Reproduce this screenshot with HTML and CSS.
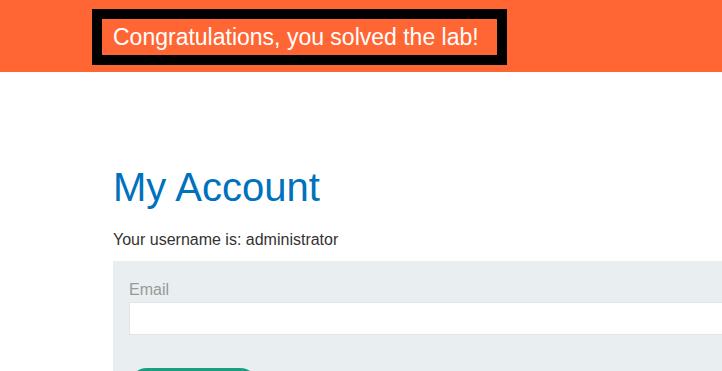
FILE: index.html
```html
<!DOCTYPE html>
<html lang="en">
<head>
<meta charset="utf-8">
<title>My Account</title>
<link rel="stylesheet" href="styles.css">
</head>
<body>
<header class="banner">
  <div class="banner-box">
    <p class="banner-text">Congratulations, you solved the lab!</p>
  </div>
</header>
<main class="container">
  <h1 class="title">My Account</h1>
  <p class="username">Your username is: administrator</p>
  <form class="panel">
    <label class="label" for="email">Email</label>
    <input class="input" id="email" type="email" name="email">
    <button class="button" type="button">Update email</button>
  </form>
</main>
</body>
</html>
```

FILE: styles.css
```css
html, body {
  overflow: hidden;
}
body {
  margin: 0;
  font-family: "Liberation Sans", Arial, sans-serif;
  color: #333332;
  background: #ffffff;
}
.banner {
  background: #ff6633;
  height: 72px;
  box-sizing: border-box;
  padding: 9px 0 0 92px;
}
.banner-box {
  width: 395px;
  height: 36px;
  border: 10px solid #000000;
  background: #ff6633;
}
.banner-text {
  margin: 0;
  padding-left: 11px;
  font-size: 23px;
  line-height: 36px;
  color: #ffffff;
  white-space: nowrap;
}
.container {
  margin-left: 113px;
  width: 720px;
}
.title {
  margin: 92px 0 0 0;
  font-size: 40px;
  line-height: 46px;
  font-weight: normal;
  color: #0071bc;
}
.username {
  margin: 20px 0 0 0;
  font-size: 16px;
  line-height: 20px;
}
.panel {
  margin-top: 11px;
  background: #e9eef0;
  padding: 19px 16px 20px 16px;
  display: flex;
  flex-direction: column;
  align-items: flex-start;
}
.label {
  font-size: 16px;
  line-height: 20px;
  color: #999999;
}
.input {
  margin-top: 2px;
  width: 100%;
  height: 33px;
  box-sizing: border-box;
  border: 1px solid #e2e4e6;
  background: #ffffff;
  font-size: 16px;
}
.button {
  margin-top: 33px;
  width: 129px;
  height: 36px;
  border: none;
  border-radius: 20px;
  background: #1a9e7f;
  color: #ffffff;
  font-family: inherit;
  font-size: 16px;
}
```
